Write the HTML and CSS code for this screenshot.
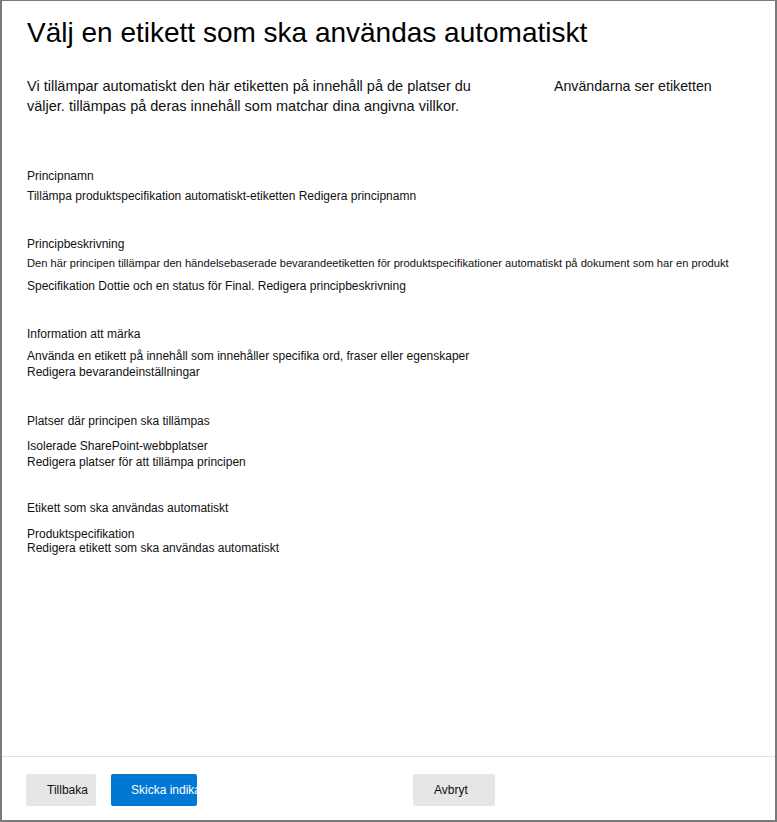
FILE: index.html
```html
<!DOCTYPE html>
<html lang="sv">
<head>
<meta charset="utf-8">
<title>Välj en etikett som ska användas automatiskt</title>
<link rel="stylesheet" href="styles.css">
</head>
<body>
<div class="dialog">
  <main class="content">
    <h1 class="title">Välj en etikett som ska användas automatiskt</h1>
    <div class="intro">
      <p class="intro-text">Vi tillämpar automatiskt den här etiketten på innehåll på de platser du väljer. tillämpas på deras innehåll som matchar dina angivna villkor.</p>
      <p class="intro-aside">Användarna ser etiketten</p>
    </div>

    <section class="field field-name">
      <h2 class="field-label">Principnamn</h2>
      <div class="field-values">
        <p>Tillämpa produktspecifikation automatiskt-etiketten Redigera principnamn</p>
      </div>
    </section>

    <section class="field field-desc">
      <h2 class="field-label">Principbeskrivning</h2>
      <div class="field-values">
        <p class="small">Den här principen tillämpar den händelsebaserade bevarandeetiketten för produktspecifikationer automatiskt på dokument som har en produkt</p>
        <p class="spaced">Specifikation Dottie och en status för Final. Redigera principbeskrivning</p>
      </div>
    </section>

    <section class="field field-info">
      <h2 class="field-label">Information att märka</h2>
      <div class="field-values">
        <p>Använda en etikett på innehåll som innehåller specifika ord, fraser eller egenskaper</p>
        <p>Redigera bevarandeinställningar</p>
      </div>
    </section>

    <section class="field field-places">
      <h2 class="field-label">Platser där principen ska tillämpas</h2>
      <div class="field-values">
        <p>Isolerade SharePoint-webbplatser</p>
        <p>Redigera platser för att tillämpa principen</p>
      </div>
    </section>

    <section class="field field-label-auto">
      <h2 class="field-label">Etikett som ska användas automatiskt</h2>
      <div class="field-values">
        <p>Produktspecifikation</p>
        <p>Redigera etikett som ska användas automatiskt</p>
      </div>
    </section>
  </main>

  <footer class="footer">
    <button class="btn btn-back" type="button">Tillbaka</button>
    <button class="btn btn-primary" type="button">Skicka indikator</button>
    <button class="btn btn-cancel" type="button">Avbryt</button>
  </footer>
</div>
</body>
</html>
```

FILE: styles.css
```css
* {
  box-sizing: border-box;
}

html, body {
  margin: 0;
  padding: 0;
  background: #ffffff;
}

body {
  font-family: "Liberation Sans", Arial, sans-serif;
  color: #111111;
}

.dialog {
  width: 777px;
  height: 822px;
  display: flex;
  flex-direction: column;
  border-style: solid;
  border-color: #7a7a7a;
  border-width: 1px 2px 2px 2px;
  background: #ffffff;
}

.content {
  flex: 1;
  padding: 15px 20px 0 25px;
}

.title {
  margin: 0;
  font-size: 28px;
  line-height: 34px;
  font-weight: 400;
  color: #000000;
}

.intro {
  display: grid;
  grid-template-columns: 475px 1fr;
  column-gap: 52px;
  margin-top: 26px;
}

.intro p {
  margin: 0;
  font-size: 14.5px;
  line-height: 20px;
}

.intro .intro-aside {
  font-size: 14.2px;
}

.field {
  margin-top: 32px;
}

.field-name {
  margin-top: 52px;
}

.field-label {
  margin: 0;
  font-size: 12px;
  line-height: 16px;
  font-weight: 400;
}

.field-values {
  margin-top: 4px;
}

.field-values p {
  margin: 0;
  font-size: 12px;
  line-height: 16px;
  white-space: nowrap;
}

.field-desc .field-values {
  margin-top: 3px;
}

.field-values .small {
  font-size: 11.15px;
}

.field-values .spaced {
  margin-top: 7px;
}

.field-desc + .field-info {
  margin-top: 32px;
}

.field-info .field-values {
  margin-top: 6px;
}

.field-places {
  margin-top: 33px;
}

.field-places .field-values {
  margin-top: 10px;
}

.field-places .field-values p {
  line-height: 15.5px;
}

.field-label-auto {
  margin-top: 30px;
}

.field-label-auto .field-values {
  margin-top: 11px;
}

.field-label-auto .field-values p {
  line-height: 14px;
}

.footer {
  display: flex;
  align-items: flex-start;
  border-top: 1px solid #e1e1e1;
  padding: 17px 0 14px 24px;
  height: 64px;
}

.btn {
  height: 32px;
  border: none;
  border-radius: 2px;
  padding: 0 0 0 20px;
  font-family: "Liberation Sans", Arial, sans-serif;
  font-size: 12px;
  text-align: left;
  white-space: nowrap;
  overflow: hidden;
  background: #e6e6e6;
  color: #111111;
}

.btn-back {
  width: 70px;
  padding-left: 21px;
}

.btn-primary {
  width: 86px;
  margin-left: 15px;
  background: #0078d4;
  color: #ffffff;
}

.btn-cancel {
  width: 82px;
  margin-left: 216px;
  padding-left: 21px;
}
```
